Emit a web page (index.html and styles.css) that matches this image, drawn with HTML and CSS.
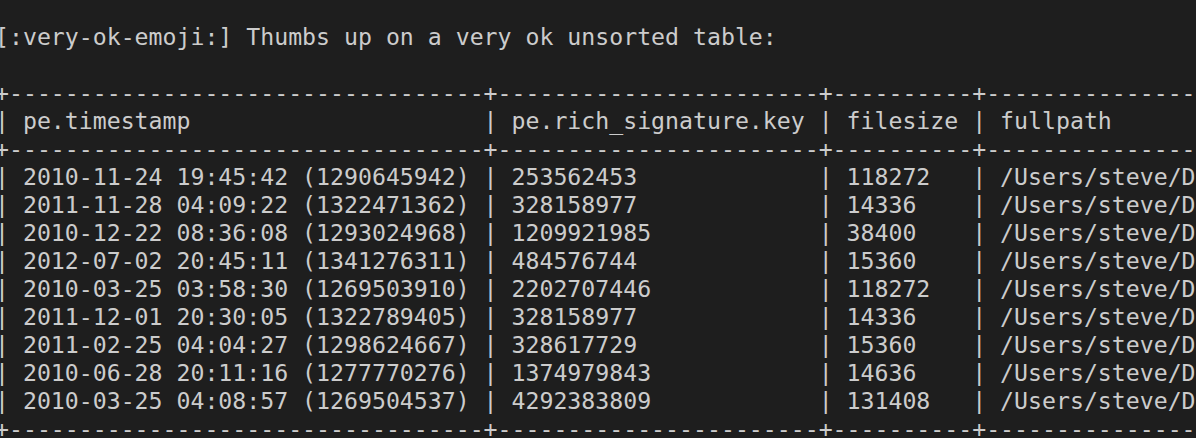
FILE: index.html
```html
<!DOCTYPE html>
<html lang="en">
<head>
    <meta charset="UTF-8">
    <meta name="viewport" content="width=device-width, initial-scale=1.0">
    <title>Terminal</title>
    <link rel="stylesheet" href="styles.css">
</head>
<body>
    <pre class="terminal" id="output"></pre>

    <script>
        const output = document.getElementById('output');

        const widths = [32, 21, 8, 58];
        const header = ['pe.timestamp', 'pe.rich_signature.key', 'filesize', 'fullpath'];
        const rows = [
            ['2010-11-24 19:45:42 (1290645942)', '253562453', '118272', '/Users/steve/Downloads/pe_samples/0a1f3c9e.exe'],
            ['2011-11-28 04:09:22 (1322471362)', '328158977', '14336', '/Users/steve/Downloads/pe_samples/1b7d22f0.exe'],
            ['2010-12-22 08:36:08 (1293024968)', '1209921985', '38400', '/Users/steve/Downloads/pe_samples/2c90e4a1.exe'],
            ['2012-07-02 20:45:11 (1341276311)', '484576744', '15360', '/Users/steve/Downloads/pe_samples/3d4b8817.exe'],
            ['2010-03-25 03:58:30 (1269503910)', '2202707446', '118272', '/Users/steve/Downloads/pe_samples/4e11a5c6.exe'],
            ['2011-12-01 20:30:05 (1322789405)', '328158977', '14336', '/Users/steve/Downloads/pe_samples/5f62d03b.exe'],
            ['2011-02-25 04:04:27 (1298624667)', '328617729', '15360', '/Users/steve/Downloads/pe_samples/6a83f9d2.exe'],
            ['2010-06-28 20:11:16 (1277770276)', '1374979843', '14636', '/Users/steve/Downloads/pe_samples/7b05c64e.exe'],
            ['2010-03-25 04:08:57 (1269504537)', '4292383809', '131408', '/Users/steve/Downloads/pe_samples/8c2e7a90.exe']
        ];

        function border() {
            return '+' + widths.map(w => '-'.repeat(w + 2)).join('+') + '+';
        }

        function line(cells) {
            return '| ' + cells.map((c, i) => c.padEnd(widths[i])).join(' | ') + ' |';
        }

        const lines = [
            '[:very-ok-emoji:] Thumbs up on a very ok unsorted table:',
            '',
            border(),
            line(header),
            border(),
            ...rows.map(line),
            border()
        ];

        output.textContent = lines.join('\n');
    </script>
</body>
</html>
```

FILE: styles.css
```css
body {
    margin: 0;
    background-color: #1e1e1e;
    overflow: hidden;
}

.terminal {
    margin: 0 0 0 -5px;
    padding-top: 23px;
    font-family: "DejaVu Sans Mono", monospace;
    font-size: 23.2px;
    line-height: 28px;
    color: #cccccc;
    white-space: pre;
}
```
